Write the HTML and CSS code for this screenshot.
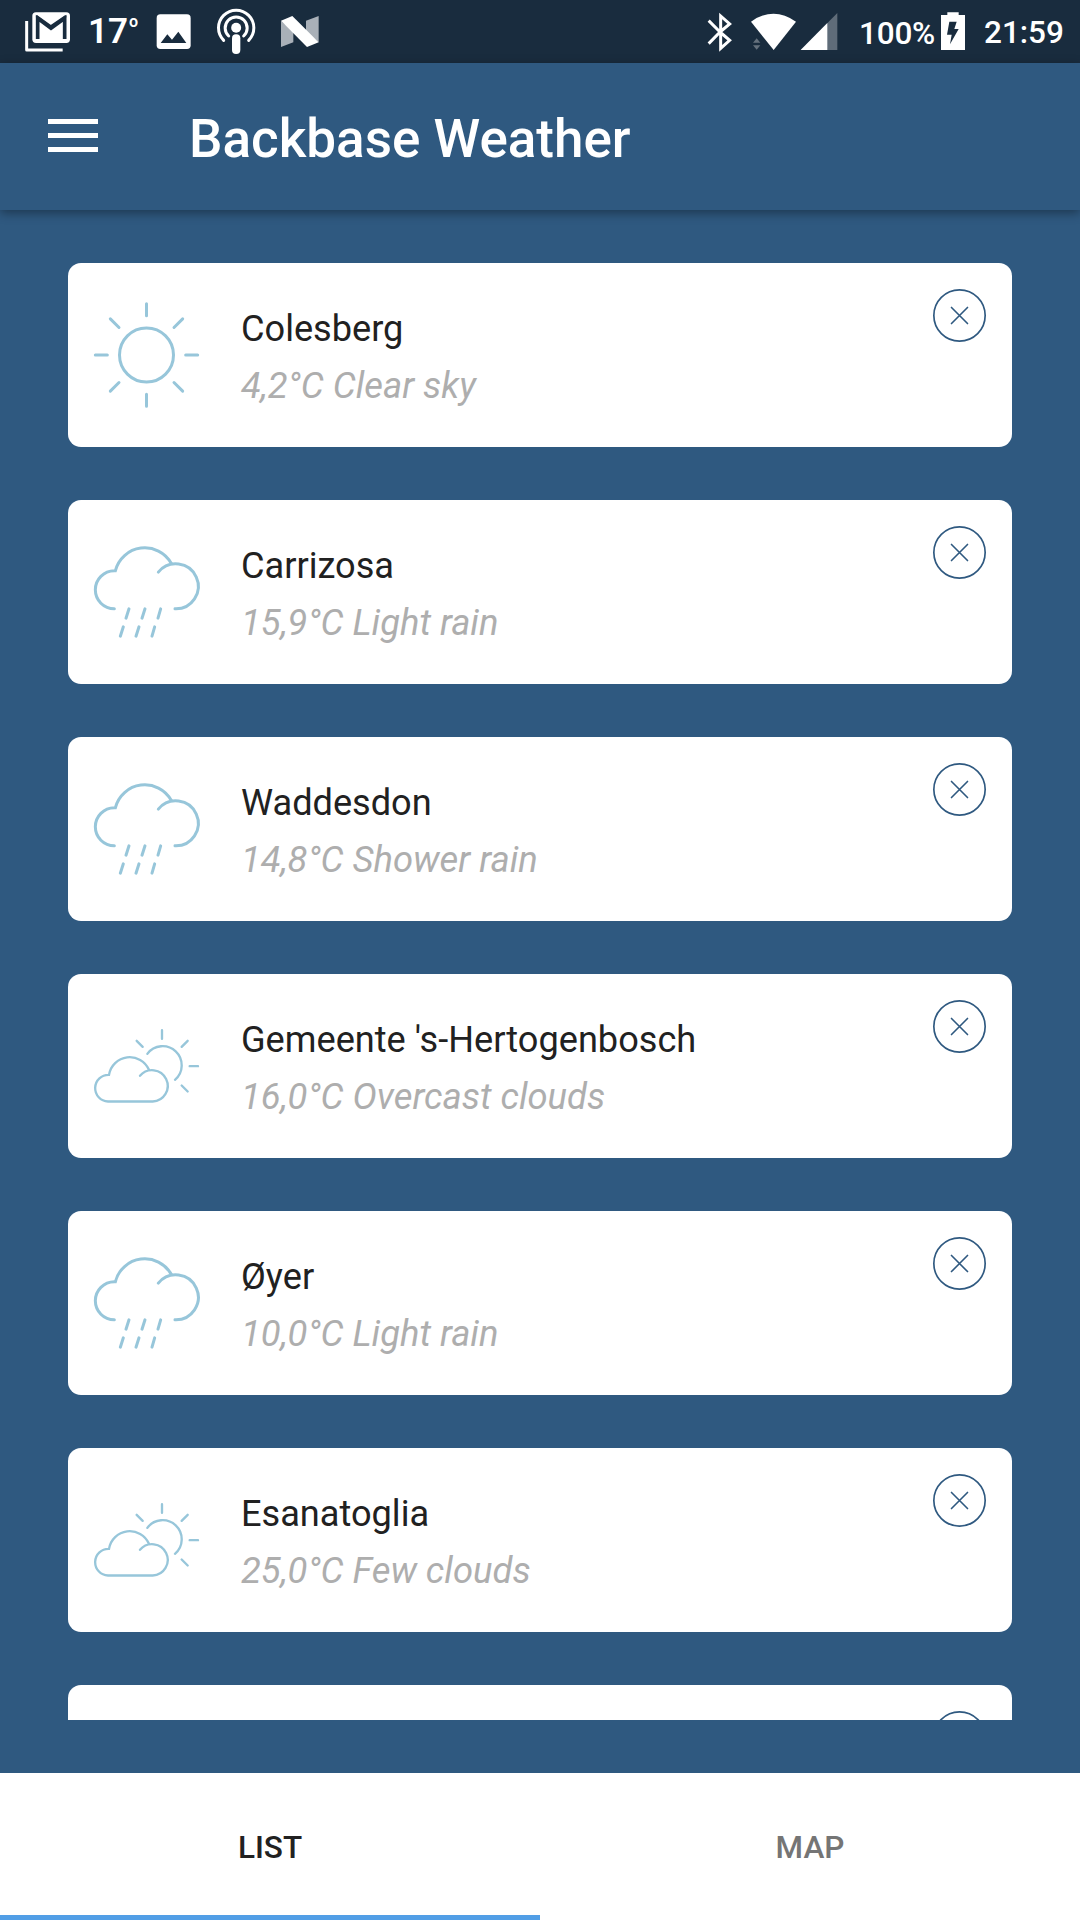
FILE: index.html
```html
<!DOCTYPE html>
<html lang="en">
<head>
<meta charset="utf-8">
<title>Backbase Weather</title>
<link rel="stylesheet" href="styles.css">
</head>
<body>
<svg class="defs" aria-hidden="true">
  <symbol id="sun" viewBox="102 142.5 315 315">
    <circle cx="259.500" cy="298.500" r="81"/>
    <path d="M259.500 145v36M259.500 416v36M106 298.500h36M377 298.500h36M151 190l26 26M151 407l26-26M368 407l-26-26M368 190l-26 26"/>
  </symbol>
  <symbol id="rain" viewBox="102 148.5 315 315">
    <path d="M163 355A57 57 0 0 1 106 298A57 57 0 0 1 163 241H166A91 91 0 0 1 334 219M295 245A67.500 67.500 0 1 1 345 355"/>
    <path d="M207 355l-9 28M255 355l-9 28M302 355l-8 28M190 409l-9 28M237 409l-9 28M284 409l-8 28"/>
  </symbol>
  <symbol id="partly-cloudy" viewBox="12 -19.5 315 315">
    <path d="M150 166A47 47 0 1 1 188 243H54A40 40 0 0 1 57 163A63 63 0 0 1 177 148M172 100A57.300 57.300 0 1 1 255 178"/>
    <path d="M216 29v26M140 61l18 18M293 61l-18 18M299 137h25M275 195l18 18"/>
  </symbol>
  <symbol id="close" viewBox="99 102 159 159">
    <circle cx="178.500" cy="181.500" r="77"/>
    <path d="M154.500 157.500l48 48M202.500 157.500l-48 48"/>
  </symbol>
</svg>

<header class="status">
  <svg width="80" height="63" viewBox="0 0 240 189">
    <path d="M80 63V150H188" fill="none" stroke="#fff" stroke-width="9" stroke-linejoin="round"/>
    <rect x="97" y="37" width="113" height="92" rx="11" fill="#fff"/>
    <path d="M113 117V55L153 85L194 55V117" fill="none" stroke="#192c3e" stroke-width="11"/>
    <path d="M109 48L153 79L198 48" fill="none" stroke="#192c3e" stroke-width="7"/>
  </svg>
  <span class="temp">17<span class="deg">o</span></span>
  <svg width="60" height="63" viewBox="435 0 180 189">
    <rect x="470" y="43" width="102" height="104" rx="11" fill="#fff"/>
    <path d="M482 129L502 103L516 119L535 95L559 129Z" fill="#192c3e"/>
  </svg>
  <svg width="60" height="63" viewBox="615 0 180 189">
    <g fill="none" stroke="#fff" stroke-width="9" stroke-linecap="round">
      <path d="M671 121A53 53 0 1 1 746 121"/>
      <path d="M686 108A33 33 0 1 1 731 108"/>
    </g>
    <circle cx="708.500" cy="83" r="15" fill="#fff"/>
    <rect x="696" y="103" width="25" height="59" rx="12" fill="#fff"/>
  </svg>
  <svg width="70" height="63" viewBox="795 0 210 189">
    <path d="M843 62L880 95V127L843 141ZM956 48V127L918 95V62Z" fill="#a9b0b8"/>
    <path d="M843 62L877 48L956 127L921 141Z" fill="#fff"/>
  </svg>

  <div class="status-right">
    <svg width="50" height="63" viewBox="0 0 150 189">
      <path d="M56 62L90 96L56 131M90 96L119 72L92 48V145L119 121L90 96" fill="none" stroke="#fff" stroke-width="9"/>
    </svg>
    <svg width="60" height="63" viewBox="150 0 180 189">
      <path d="M183 65Q251 17 318 65L251 150Z" fill="#fff"/>
      <path d="M189 128L200 115L211 128ZM189 136H211L200 149Z" fill="#65717d"/>
    </svg>
    <svg width="50" height="63" viewBox="330 0 150 189">
      <path d="M332 150L442 39V150Z" fill="#5f6c79"/>
      <path d="M332 150L412 69V150Z" fill="#fff"/>
    </svg>
    <span class="battery-text">100%</span>
    <svg width="35" height="63" viewBox="735 0 105 189">
      <path d="M753 45H772V37H806V45H825V150H753Z" fill="#fff"/>
      <path d="M778 65H800L793 87H806L780 133L785 104H771Z" fill="#192c3e"/>
    </svg>
    <span class="clock">21:59</span>
  </div>
</header>

<div class="appbar">
  <div class="menu"><i></i><i></i><i></i></div>
  <h1>Backbase Weather</h1>
</div>

<main class="list">
  <article class="card">
    <svg class="weather"><use href="#sun"/></svg>
    <div class="info"><h2>Colesberg</h2><p>4,2°C Clear sky</p></div>
    <svg class="close"><use href="#close"/></svg>
  </article>
  <article class="card">
    <svg class="weather"><use href="#rain"/></svg>
    <div class="info"><h2>Carrizosa</h2><p>15,9°C Light rain</p></div>
    <svg class="close"><use href="#close"/></svg>
  </article>
  <article class="card">
    <svg class="weather"><use href="#rain"/></svg>
    <div class="info"><h2>Waddesdon</h2><p>14,8°C Shower rain</p></div>
    <svg class="close"><use href="#close"/></svg>
  </article>
  <article class="card">
    <svg class="weather thin"><use href="#partly-cloudy"/></svg>
    <div class="info"><h2>Gemeente 's-Hertogenbosch</h2><p>16,0°C Overcast clouds</p></div>
    <svg class="close"><use href="#close"/></svg>
  </article>
  <article class="card">
    <svg class="weather"><use href="#rain"/></svg>
    <div class="info"><h2>Øyer</h2><p>10,0°C Light rain</p></div>
    <svg class="close"><use href="#close"/></svg>
  </article>
  <article class="card">
    <svg class="weather thin"><use href="#partly-cloudy"/></svg>
    <div class="info"><h2>Esanatoglia</h2><p>25,0°C Few clouds</p></div>
    <svg class="close"><use href="#close"/></svg>
  </article>
  <article class="card">
    <svg class="close"><use href="#close"/></svg>
  </article>
</main>

<nav class="tabs">
  <div class="tab active">LIST</div>
  <div class="tab">MAP</div>
</nav>
</body>
</html>
```

FILE: styles.css
```css
* { box-sizing: border-box; }

body {
  margin: 0;
  width: 1080px;
  height: 1920px;
  overflow: hidden;
  display: flex;
  flex-direction: column;
  background: #2f5980;
  font-family: Roboto, sans-serif;
}

h1, h2, p { margin: 0; }

.defs { display: none; }
symbol { overflow: visible; }

.status {
  display: flex;
  flex: none;
  height: 63px;
  background: #192c3e;
  color: #fff;
  font-weight: 500;
}
.status svg { flex: none; }
.temp {
  display: flex;
  width: 65px;
  padding-left: 8px;
  font-size: 35px;
  font-weight: 600;
  line-height: 63px;
}
.deg {
  padding-left: 1px;
  font-size: 16px;
  line-height: 44px;
}
.status-right {
  display: flex;
  margin-left: auto;
  width: 390px;
  font-size: 31.5px;
  line-height: 65px;
}
.battery-text { width: 85px; padding-left: 9px; letter-spacing: -0.2px; line-height: 67px; }
.clock { padding-left: 14px; }

.appbar {
  display: flex;
  flex: none;
  align-items: center;
  height: 147px;
  padding-left: 48px;
  background: #2f5980;
  box-shadow: 0 3px 10px rgba(0, 0, 0, .38);
}
.menu {
  display: flex;
  flex-direction: column;
  gap: 9px;
  width: 50px;
  margin-right: 91px;
  padding-bottom: 2px;
}
.menu i { height: 5px; background: #fff; }
.appbar h1 {
  padding-top: 5px;
  color: #fff;
  font-size: 53px;
  font-weight: 500;
  line-height: 62px;
}

.list {
  display: flex;
  flex-direction: column;
  gap: 53px;
  height: 1510px;
  padding: 53px 68px 0;
  overflow: hidden;
}
.card {
  display: flex;
  flex: none;
  align-items: center;
  height: 184px;
  padding: 0 26px;
  background: #fff;
  border-radius: 13px;
}
.weather {
  width: 105px;
  height: 105px;
  overflow: visible;
  fill: none;
  stroke: #97c6da;
  stroke-width: 9;
  stroke-linecap: round;
}
.thin { stroke-width: 7; }
.info { padding: 4px 0 0 42px; }
.info h2 {
  color: #212121;
  font-size: 36.15px;
  font-weight: 400;
  line-height: 57px;
}
.info p {
  color: #aeaeae;
  font-size: 36.4px;
  font-style: italic;
  line-height: 57px;
}
.close {
  width: 53px;
  height: 53px;
  margin: 26px 0 0 auto;
  align-self: flex-start;
  fill: none;
  stroke: #2f5980;
  stroke-width: 5;
  stroke-linecap: round;
}

.tabs {
  display: flex;
  flex: none;
  height: 147px;
  margin-top: 53px;
  background: #fff;
}
.tab {
  flex: 1;
  padding-top: 7px;
  border-bottom: 5px solid transparent;
  color: #757575;
  font-size: 31.5px;
  font-weight: 500;
  line-height: 136px;
  text-align: center;
}
.active {
  border-bottom-color: #519ee6;
  color: #212121;
}
```
